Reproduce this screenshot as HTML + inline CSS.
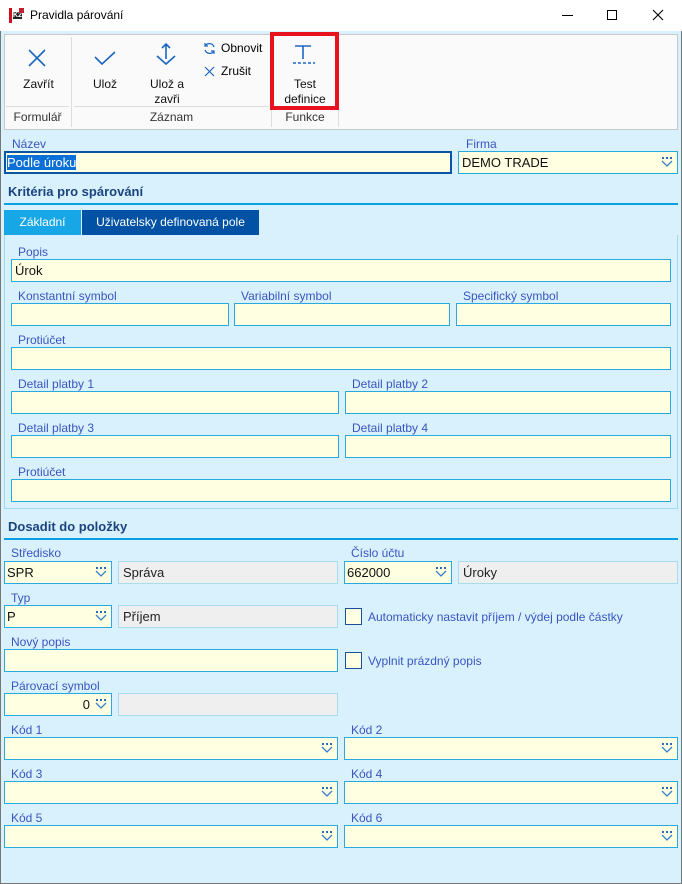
<!DOCTYPE html>
<html><head><meta charset="utf-8"><style>
*{box-sizing:border-box;margin:0;padding:0}
body{width:682px;height:884px;position:relative;overflow:hidden;background:#d9f1fd;font-family:"Liberation Sans",sans-serif;}
.a{position:absolute}
.lbl{position:absolute;font-size:12px;color:#3a55c0;line-height:13px;white-space:nowrap}
.in{position:absolute;height:23px;background:#ffffe1;border:1px solid #2aa8e0;font-size:13px;color:#111;padding-left:3px;line-height:21px;white-space:nowrap}
.gr{position:absolute;height:23px;background:#efefef;border:1px solid #a8dcf0;font-size:13px;color:#222;padding-left:4px;line-height:21px}
.dd{position:absolute;right:4px;top:5px;width:12px;height:11px}
.hd{position:absolute;font-size:13px;font-weight:bold;color:#1a4480;left:8px}
.rl{position:absolute;left:4px;width:674px;height:2px;background:#0aa0e2}
.rb{position:absolute;font-size:12px;color:#111;text-align:center;line-height:15px}
.cb{position:absolute;width:17px;height:17px;border:1px solid #1a4f9a;background:#ffffe1}
</style></head><body>
<svg width="0" height="0" style="position:absolute"><defs><symbol id="dd" viewBox="0 0 12 11"><rect x="1" y="0" width="2" height="2" fill="#2a6cb8"/><rect x="5" y="0" width="2" height="2" fill="#2a6cb8"/><rect x="9" y="0" width="2" height="2" fill="#2a6cb8"/><path d="M1 4 L6 9 L11 4" fill="none" stroke="#3a80c8" stroke-width="1.3"/></symbol></defs></svg>
<div class="a" style="left:0;top:0;width:682px;height:31px;background:#fff"></div>
<div class="a" style="left:9px;top:8px;width:15px;height:15px;background:#fff;border-left:3px solid #d01020"><div style="position:absolute;left:1px;top:4px;font-size:7px;font-weight:bold;background:#222;color:#fff;line-height:7px">K2</div><div style="position:absolute;right:0;top:0;width:5px;height:5px;background:#c02030"></div></div>
<div class="a" style="left:30px;top:8px;font-size:12px;color:#000">Pravidla párování</div>
<div class="a" style="left:562px;top:15px;width:11px;height:1px;background:#000"></div>
<div class="a" style="left:607px;top:10px;width:10px;height:10px;border:1px solid #000"></div>
<svg class="a" style="left:652px;top:9px" width="12" height="12"><path d="M1 1L11 11M11 1L1 11" stroke="#000" stroke-width="1.1"/></svg>
<div class="a" style="left:0;top:31px;width:1px;height:853px;background:#777"></div>
<div class="a" style="left:681px;top:31px;width:1px;height:853px;background:#777"></div>
<div class="a" style="left:0;top:883px;width:682px;height:1px;background:#777"></div>
<div class="a" style="left:4px;top:34px;width:674px;height:96px;background:#fafafa;border:1px solid #c8c8c8"></div>
<div class="a" style="left:71px;top:37px;width:1px;height:90px;background:#ddd"></div>
<div class="a" style="left:271px;top:37px;width:1px;height:90px;background:#ddd"></div>
<div class="a" style="left:338px;top:37px;width:1px;height:90px;background:#ddd"></div>
<div class="a" style="left:6px;top:106px;width:63px;height:1px;background:#ddd"></div>
<div class="a" style="left:74px;top:106px;width:195px;height:1px;background:#ddd"></div>
<svg class="a" style="left:27px;top:48px" width="20" height="20"><path d="M2 2L18 18M18 2L2 18" stroke="#1a66c0" stroke-width="1.6"/></svg>
<div class="rb" style="left:10px;top:77px;width:57px">Zavřít</div>
<div class="rb" style="left:6px;top:110px;width:63px;color:#333">Formulář</div>
<svg class="a" style="left:93px;top:50px" width="24" height="16"><path d="M2 7L9 14L22 2" fill="none" stroke="#1a66c0" stroke-width="1.6"/></svg>
<div class="rb" style="left:80px;top:77px;width:50px">Ulož</div>
<svg class="a" style="left:155px;top:42px" width="24" height="26"><path d="M2 14L11 22L20 14" fill="none" stroke="#1a66c0" stroke-width="1.6"/><path d="M11 2V17M7 6L11 2L15 6" fill="none" stroke="#1a66c0" stroke-width="1.6"/></svg>
<div class="rb" style="left:140px;top:77px;width:54px">Ulož a<br>zavři</div>
<svg class="a" style="left:203px;top:42px" width="13" height="13"><path d="M11 5A5 5 0 0 0 2 4M2 8A5 5 0 0 0 11 9" fill="none" stroke="#1a66c0" stroke-width="1.2"/><path d="M2 1V4H5M11 12V9H8" fill="none" stroke="#1a66c0" stroke-width="1.2"/></svg>
<div class="a" style="left:221px;top:41px;font-size:12px">Obnovit</div>
<svg class="a" style="left:204px;top:66px" width="11" height="11"><path d="M1 1L10 10M10 1L1 10" stroke="#1a66c0" stroke-width="1.2"/></svg>
<div class="a" style="left:221px;top:64px;font-size:12px">Zrušit</div>
<div class="rb" style="left:74px;top:110px;width:195px;color:#333">Záznam</div>
<svg class="a" style="left:291px;top:44px" width="26" height="22"><path d="M4 2H20M12 2V15" stroke="#1a66c0" stroke-width="1.6"/><path d="M2 19H24" stroke="#1a66c0" stroke-width="1.6" stroke-dasharray="3 2"/></svg>
<div class="rb" style="left:276px;top:77px;width:58px">Test<br>definice</div>
<div class="rb" style="left:272px;top:110px;width:66px;color:#333">Funkce</div>
<div class="a" style="left:270px;top:32px;width:69px;height:78px;border:4px solid #e8111e"></div>
<div class="lbl" style="left:12px;top:138px">Název</div>
<div class="in" style="left:4px;top:151px;width:448px;border:2px solid #0a55a5;padding-left:1px;line-height:19px"><span style="background:#0a6fd6;color:#fff">Podle úroku</span></div>
<div class="lbl" style="left:466px;top:138px">Firma</div>
<div class="in" style="left:458px;top:151px;width:220px">DEMO TRADE<svg class="dd"><use href="#dd"/></svg></div>
<div class="hd" style="top:184px">Kritéria pro spárování</div>
<div class="rl" style="top:203px"></div>
<div class="a" style="left:4px;top:210px;width:77px;height:25px;background:#17a6e6;color:#fff;font-size:12px;text-align:center;line-height:25px">Základní</div>
<div class="a" style="left:82px;top:210px;width:177px;height:25px;background:#0152a5;color:#fff;font-size:12px;text-align:center;line-height:25px">Uživatelsky definovaná pole</div>
<div class="a" style="left:4px;top:235px;width:674px;height:274px;border:1px solid #9ed9f2;border-top:none"></div>
<div class="lbl" style="left:18px;top:246px">Popis</div>
<div class="in" style="left:11px;top:259px;width:660px">Úrok</div>
<div class="lbl" style="left:18px;top:290px">Konstantní symbol</div>
<div class="lbl" style="left:241px;top:290px">Variabilní symbol</div>
<div class="lbl" style="left:463px;top:290px">Specifický symbol</div>
<div class="in" style="left:11px;top:303px;width:218px"></div>
<div class="in" style="left:234px;top:303px;width:216px"></div>
<div class="in" style="left:456px;top:303px;width:215px"></div>
<div class="lbl" style="left:18px;top:334px">Protiúčet</div>
<div class="in" style="left:11px;top:347px;width:660px"></div>
<div class="lbl" style="left:18px;top:378px">Detail platby 1</div>
<div class="lbl" style="left:352px;top:378px">Detail platby 2</div>
<div class="in" style="left:11px;top:391px;width:328px"></div>
<div class="in" style="left:345px;top:391px;width:326px"></div>
<div class="lbl" style="left:18px;top:422px">Detail platby 3</div>
<div class="lbl" style="left:352px;top:422px">Detail platby 4</div>
<div class="in" style="left:11px;top:435px;width:328px"></div>
<div class="in" style="left:345px;top:435px;width:326px"></div>
<div class="lbl" style="left:18px;top:466px">Protiúčet</div>
<div class="in" style="left:11px;top:479px;width:660px"></div>
<div class="hd" style="top:519px">Dosadit do položky</div>
<div class="rl" style="top:538px"></div>
<div class="lbl" style="left:11px;top:547px">Středisko</div>
<div class="in" style="left:4px;top:561px;width:108px;padding-left:2px">SPR<svg class="dd"><use href="#dd"/></svg></div>
<div class="gr" style="left:118px;top:561px;width:220px">Správa</div>
<div class="lbl" style="left:351px;top:547px">Číslo účtu</div>
<div class="in" style="left:344px;top:561px;width:108px;padding-left:2px">662000<svg class="dd"><use href="#dd"/></svg></div>
<div class="gr" style="left:458px;top:561px;width:220px">Úroky</div>
<div class="lbl" style="left:11px;top:592px">Typ</div>
<div class="in" style="left:4px;top:605px;width:108px;padding-left:2px">P<svg class="dd"><use href="#dd"/></svg></div>
<div class="gr" style="left:118px;top:605px;width:220px">Příjem</div>
<div class="cb" style="left:345px;top:608px"></div>
<div class="lbl" style="left:368px;top:611px">Automaticky nastavit příjem / výdej podle částky</div>
<div class="lbl" style="left:11px;top:636px">Nový popis</div>
<div class="in" style="left:4px;top:649px;width:334px"></div>
<div class="cb" style="left:345px;top:652px"></div>
<div class="lbl" style="left:368px;top:655px">Vyplnit prázdný popis</div>
<div class="lbl" style="left:11px;top:680px">Párovací symbol</div>
<div class="in" style="left:4px;top:693px;width:108px;text-align:right;padding-right:21px">0<svg class="dd"><use href="#dd"/></svg></div>
<div class="gr" style="left:118px;top:693px;width:220px"></div>
<div class="lbl" style="left:11px;top:724px">Kód 1</div>
<div class="lbl" style="left:351px;top:724px">Kód 2</div>
<div class="in" style="left:4px;top:737px;width:334px"><svg class="dd"><use href="#dd"/></svg></div>
<div class="in" style="left:344px;top:737px;width:334px"><svg class="dd"><use href="#dd"/></svg></div>
<div class="lbl" style="left:11px;top:768px">Kód 3</div>
<div class="lbl" style="left:351px;top:768px">Kód 4</div>
<div class="in" style="left:4px;top:781px;width:334px"><svg class="dd"><use href="#dd"/></svg></div>
<div class="in" style="left:344px;top:781px;width:334px"><svg class="dd"><use href="#dd"/></svg></div>
<div class="lbl" style="left:11px;top:812px">Kód 5</div>
<div class="lbl" style="left:351px;top:812px">Kód 6</div>
<div class="in" style="left:4px;top:825px;width:334px"><svg class="dd"><use href="#dd"/></svg></div>
<div class="in" style="left:344px;top:825px;width:334px"><svg class="dd"><use href="#dd"/></svg></div>
</body></html>
